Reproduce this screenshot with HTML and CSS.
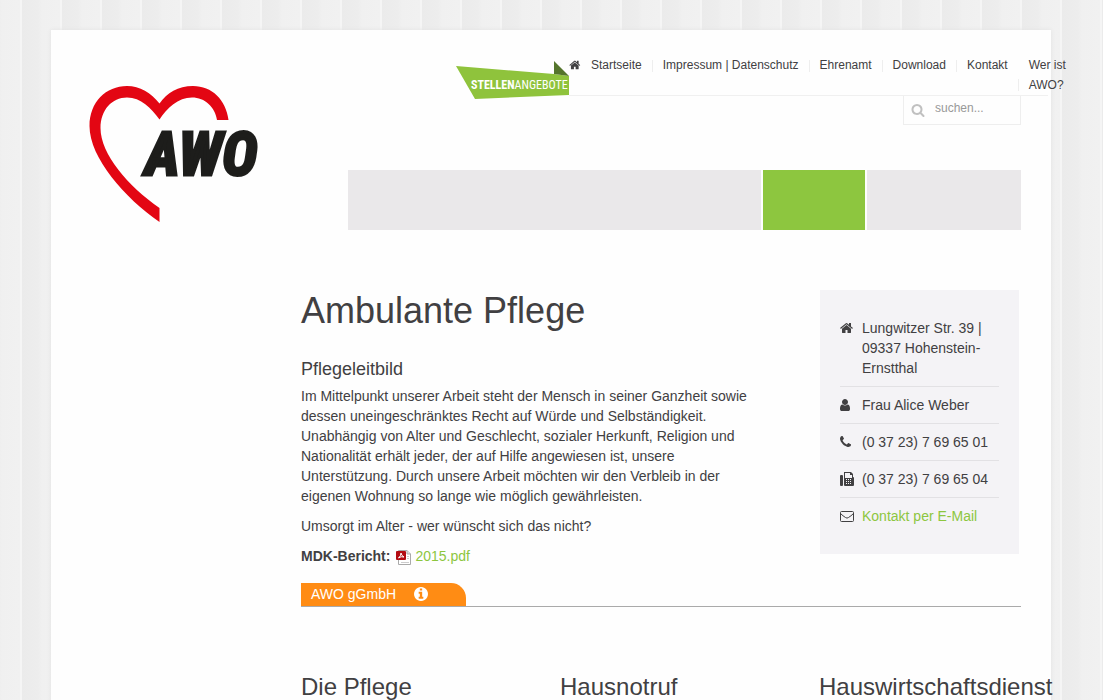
FILE: index.html
```html
<!DOCTYPE html>
<html lang="de">
<head>
<meta charset="utf-8">
<meta name="viewport" content="width=device-width, initial-scale=1">
<title>Ambulante Pflege – AWO</title>
<link rel="stylesheet" href="styles.css">
</head>
<body>
<div class="page">
  <header class="header">
    <a class="logo" href="#" aria-label="AWO Startseite">
      <svg width="170" height="137" viewBox="89 86 170 137">
        <path fill="#e30613" d="M159.500 222C125 198 89.500 158 89.500 126C89.500 102 106 86 127 86C140 86 151 93 159.500 103.500C167 93 178 86 193 86C212 86 226 100 228.500 120H217C215 107 205 97.500 192 97.500C178 97.500 167 108 159.500 119.500C151 108 141 97.500 127 97.500C112 97.500 100.500 110 100.500 128C100.500 154 128 186 159.500 208Z"/>
        <text class="logo-text" x="145" y="175">AWO</text>
      </svg>
    </a>
    <div class="header-body">
      <div class="topbar">
        <a class="jobs" href="#" aria-label="Stellenangebote">
          <svg width="113" height="38" viewBox="0 0 113 38">
            <path fill="#8fc33c" d="M0 5L98 13L113 15V34L19 38Z"/>
            <path fill="#55752c" d="M98 0L113 15L98 13Z"/>
            <text class="jobs-text" x="15" y="28"><tspan class="jobs-strong">STELLEN</tspan>ANGEBOTE</text>
          </svg>
        </a>
        <nav class="meta-nav" aria-label="Service">
          <ul class="meta-list">
            <li><a href="#"><svg class="meta-icon" width="12" height="12" viewBox="64 0 1728 1792"><path d="M1472 992v480q0 26-19 45t-45 19h-384v-384h-256v384h-384q-26 0-45-19t-19-45v-480q0-1 .5-3t.5-3l575-474 575 474q1 2 1 6zm223-69l-62 74q-8 9-21 11h-3q-13 0-21-7l-692-577-692 577q-12 8-24 7-13-2-21-11l-62-74q-8-10-7-23.500t11-21.500l719-599q32-26 76-26t76 26l244 204v-195q0-14 9-23t23-9h192q14 0 23 9t9 23v408l219 182q10 8 11 21.500t-7 23.500z"/></svg>Startseite</a></li>
            <li><a href="#">Impressum | Datenschutz</a></li>
            <li><a href="#">Ehrenamt</a></li>
            <li><a href="#">Download</a></li>
            <li><a href="#">Kontakt</a></li>
            <li><a href="#">Wer ist<br>AWO?</a></li>
          </ul>
        </nav>
      </div>
      <form class="search">
        <svg width="14" height="14" viewBox="0 0 1792 1792" aria-hidden="true"><path d="M1216 832q0-185-131.500-316.500t-316.500-131.500-316.500 131.500-131.500 316.500 131.500 316.500 316.500 131.500 316.500-131.500 131.500-316.500zm512 832q0 52-38 90t-90 38q-54 0-90-38l-343-342q-179 124-399 124-143 0-273.500-55.500t-225-150-150-225-55.500-273.500 55.500-273.500 150-225 225-150 273.500-55.500 273.500 55.500 225 150 150 225 55.500 273.500q0 220-124 399l343 343q37 37 37 90z"/></svg>
        <input type="text" placeholder="suchen..." aria-label="Suchen">
      </form>
      <nav class="main-nav" aria-label="Hauptmenü">
        <span class="main-nav-item main-nav-wide"></span>
        <span class="main-nav-item main-nav-active"></span>
        <span class="main-nav-item main-nav-rest"></span>
      </nav>
    </div>
  </header>

  <main class="content">
    <article class="article">
      <div class="article-text">
        <h1>Ambulante Pflege</h1>
        <h3>Pflegeleitbild</h3>
        <p>Im Mittelpunkt unserer Arbeit steht der Mensch in seiner Ganzheit sowie dessen uneingeschränktes Recht auf Würde und Selbständigkeit. Unabhängig von Alter und Geschlecht, sozialer Herkunft, Religion und Nationalität erhält jeder, der auf Hilfe angewiesen ist, unsere Unterstützung. Durch unsere Arbeit möchten wir den Verbleib in der eigenen Wohnung so lange wie möglich gewährleisten.</p>
        <p>Umsorgt im Alter - wer wünscht sich das nicht?</p>
        <p class="report"><strong>MDK-Bericht:</strong>
          <a href="#"><svg width="16" height="16" viewBox="0 0 16 16"><path fill="#fff" stroke="#aaa" d="M2.500 1.500H11L14.500 5V15.500H2.500Z"/><path fill="#ddd" stroke="#aaa" d="M11 1.500V5H14.500"/><path stroke="#ccc" d="M11 7.500H13M11 9.500H13M5 13.500H13"/><rect x="0" y="2" width="10" height="9" rx="1" fill="#b30b12"/><path fill="none" stroke="#fff" d="M2.500 9Q5 7 5 4Q5.500 7 8 8Q5 7 2.500 9"/></svg>2015.pdf</a></p>
      </div>
      <aside class="contact">
        <ul>
          <li><svg width="14" height="14" viewBox="64 0 1792 1792"><path d="M1472 992v480q0 26-19 45t-45 19h-384v-384h-256v384h-384q-26 0-45-19t-19-45v-480q0-1 .5-3t.5-3l575-474 575 474q1 2 1 6zm223-69l-62 74q-8 9-21 11h-3q-13 0-21-7l-692-577-692 577q-12 8-24 7-13-2-21-11l-62-74q-8-10-7-23.500t11-21.500l719-599q32-26 76-26t76 26l244 204v-195q0-14 9-23t23-9h192q14 0 23 9t9 23v408l219 182q10 8 11 21.500t-7 23.500z"/></svg><span>Lungwitzer Str. 39 | 09337 Hohenstein-Ernstthal</span></li>
          <li><svg width="14" height="14" viewBox="256 0 1792 1792"><path d="M1536 1399q0 109-62.500 187t-150.500 78h-854q-88 0-150.500-78t-62.500-187q0-85 8.500-160.500t31.500-152 58.500-131 94-89 134.500-34.500q131 128 313 128t313-128q76 0 134.500 34.500t94 89 58.500 131 31.500 152 8.500 160.500zm-256-887q0 159-112.500 271.500t-271.500 112.500-271.500-112.500-112.500-271.500 112.500-271.500 271.500-112.500 271.500 112.500 112.500 271.500z"/></svg><span>Frau Alice Weber</span></li>
          <li><svg width="14" height="14" viewBox="192 0 1792 1792"><path d="M1600 1240q0 27-10 70.500t-21 68.500q-21 50-122 106-94 51-186 51-27 0-52.500-3.500t-57.500-12.500-47.500-14.500-55.500-20.500-49-18q-98-35-175-83-128-79-264.500-215.500t-215.500-264.500q-48-77-83-175-3-9-18-49t-20.500-55.500-14.500-47.500-12.500-57.500-3.500-52.500q0-92 51-186 56-101 106-122 25-11 68.500-21t70.500-10q14 0 21 3 18 6 53 76 11 19 30 54t35 63.500 31 53.500q3 4 17.500 25t21.500 35.500 7 28.500q0 20-28.500 50t-62 55-62 53-28.500 46q0 9 5 22.500t8.500 20.500 14 24 11.500 19q76 137 174 235t235 174q2 1 19 11.500t24 14 20.500 8.500 22.500 5q18 0 46-28.500t53-62 55-62 50-28.500q14 0 28.500 7t35.500 21.500 25 17.500q25 15 53.500 31t63.500 35 54 30q70 35 76 53 3 7 3 21z"/></svg><span>(0 37 23) 7 69 65 01</span></li>
          <li><svg width="14" height="14" viewBox="0 0 14 14"><rect x="0" y="3" width="3" height="11" rx="1"/><path fill-rule="evenodd" d="M4 13V0H11L13 2V5Q14 5 14 6V13Q14 14 13 14H5Q4 14 4 13ZM5 1V6H12V3H10V1ZM6 7V8H7V7ZM8 7V8H9V7ZM10 7V8H11V7ZM6 9V10H7V9ZM8 9V10H9V9ZM10 9V10H11V9ZM6 11V12H7V11ZM8 11V12H9V11ZM10 11V12H11V11Z"/></svg><span>(0 37 23) 7 69 65 04</span></li>
          <li><svg width="14" height="14" viewBox="0 0 14 14"><g fill="none" stroke="#414042"><rect x=".5" y="2.500" width="13" height="10" rx="1"/><path d="M.5 4.500Q3 7 5.500 8.500Q7 9.700 8.500 8.500Q11 7 13.500 4.500"/></g></svg><a href="#">Kontakt per E-Mail</a></li>
        </ul>
      </aside>
    </article>
    <div class="provider">
      <a class="provider-tab" href="#">AWO gGmbH <svg width="14" height="14" viewBox="128 128 1536 1536"><path d="M1152 1376v-160q0-14-9-23t-23-9h-96v-512q0-14-9-23t-23-9h-320q-14 0-23 9t-9 23v160q0 14 9 23t23 9h96v320h-96q-14 0-23 9t-9 23v160q0 14 9 23t23 9h448q14 0 23-9t9-23zm-128-896v-160q0-14-9-23t-23-9h-192q-14 0-23 9t-9 23v160q0 14 9 23t23 9h192q14 0 23-9t9-23zm640 416q0 209-103 385.500t-279.500 279.500-385.500 103-385.500-103-279.500-279.500-103-385.500 103-385.500 279.500-279.500 385.500-103 385.500 103 279.500 279.500 103 385.500z"/></svg></a>
    </div>
    <div class="services">
      <h2>Die Pflege</h2>
      <h2>Hausnotruf</h2>
      <h2>Hauswirtschaftsdienst</h2>
    </div>
  </main>
</div>
</body>
</html>
```
FILE: styles.css
```css
* {
  box-sizing: border-box;
}

html {
  overflow: hidden;
}

body {
  margin: 0;
  padding-right: 1px;
  color: #414042;
  font: 14px/20px "Liberation Sans", Arial, sans-serif;
  background: #f1f1f1 linear-gradient(90deg, #ebebeb 0, #ededed 16px, #f0f0f0 20px, #f1f1f1 38px, #f5f5f5 38px) 22px 0 / 40px 100%;
}

a {
  color: #8dc63f;
  text-decoration: none;
}

h1,
h2,
h3 {
  margin: 0;
  font-weight: 400;
}

ul {
  margin: 0;
  padding: 0;
  list-style: none;
}

svg {
  display: block;
  fill: #414042;
}

.page {
  max-width: 1000px;
  min-height: 100vh;
  margin: 30px auto 0;
  background: #fefefe;
  box-shadow: 0 0 4px #e2e2e2;
}

.header {
  display: flex;
  justify-content: space-between;
  padding: 25px 30px 0 38px;
}

.logo {
  margin-top: 31px;
}

.logo svg {
  overflow: visible;
}

.logo-text {
  font: italic bold 60px "Roboto Condensed", "Liberation Sans Narrow", sans-serif;
  fill: #1d1d1b;
  stroke: #1d1d1b;
  stroke-width: 3px;
}

.header-body {
  display: flex;
  flex-direction: column;
  width: 673px;
}

.topbar {
  display: flex;
  align-items: flex-start;
  margin: 0 -27px 0 108px;
}

.jobs {
  flex: none;
  margin: 6px 0 -3px;
}

.jobs-text {
  font: 12px "Roboto Condensed", "Liberation Sans Narrow", sans-serif;
  fill: #fff;
}

.jobs-strong {
  font-weight: 700;
}

.meta-nav {
  flex: 1;
  min-width: 0;
  border-bottom: 1px solid #f0f0f0;
  font-size: 12px;
}

.meta-list {
  display: flex;
}

.meta-list li {
  flex: none;
  padding: 0 10px;
}

.meta-list li + li {
  padding-left: 11px;
  background: linear-gradient(#eee, #eee) no-repeat left 5px / 1px 12px;
}

.meta-list li:first-child {
  padding-left: 0;
}

.meta-list li:last-child {
  background-position: left bottom 4px;
}

.meta-list a {
  display: flex;
  align-items: center;
  gap: 10px;
  color: #414042;
}

.search {
  display: flex;
  align-items: center;
  align-self: flex-end;
  gap: 10px;
  width: 118px;
  height: 29px;
  padding: 0 7px;
  border: 1px solid #eee;
  border-top: 0;
}

.search svg {
  flex: none;
  fill: #c0c0c0;
}

.search input {
  min-width: 0;
  width: 100%;
  height: 20px;
  margin-bottom: 4px;
  padding: 0;
  border: 0;
  background: none;
  font: 12px/20px "Liberation Sans", Arial, sans-serif;
}

.search input::placeholder {
  color: #999;
  opacity: 1;
}

.main-nav {
  display: flex;
  gap: 2px;
  height: 60px;
  margin-top: 45px;
}

.main-nav-item {
  background: #eae8ea;
}

.main-nav-wide {
  flex: 413;
}

.main-nav-active {
  flex: 102;
  background: #8dc63f;
}

.main-nav-rest {
  flex: 154;
}

.content {
  padding: 60px 30px 0 250px;
}

.article {
  display: flex;
  justify-content: space-between;
  gap: 58px;
}

.article-text {
  flex: 1;
}

.article-text p {
  margin: 0 0 10px;
}

h1 {
  margin-bottom: 27px;
  font-size: 36px;
  line-height: 42px;
}

h3 {
  margin-bottom: 7px;
  font-size: 18px;
  line-height: 20px;
}

h2 {
  font-size: 24px;
  line-height: 28px;
}

.report,
.report a {
  display: flex;
  gap: 6px;
}

.report a {
  gap: 3px;
}

.report svg {
  margin-top: 3px;
}

.contact {
  flex: none;
  align-self: flex-start;
  width: 199px;
  margin-right: 2px;
  padding: 20px;
  background: #f4f3f6;
}

.contact li {
  display: flex;
  gap: 8px;
  padding: 8px 0;
}

.contact li + li {
  border-top: 1px solid #e2e1e4;
}

.contact svg {
  flex: none;
  margin-top: 3px;
}

.provider {
  margin-top: 7px;
  border-bottom: 1px solid #aaa;
}

.provider-tab {
  display: flex;
  align-items: center;
  gap: 18px;
  width: 165px;
  height: 23px;
  padding: 0 0 1px 10px;
  border-top-right-radius: 15px;
  background: #ff8c14;
  color: #fff;
}

.provider-tab svg {
  fill: #fff;
}

.services {
  display: grid;
  grid-template-columns: repeat(3, minmax(0, 1fr));
  gap: 57px;
  padding: 66px 0 30px;
}
```
